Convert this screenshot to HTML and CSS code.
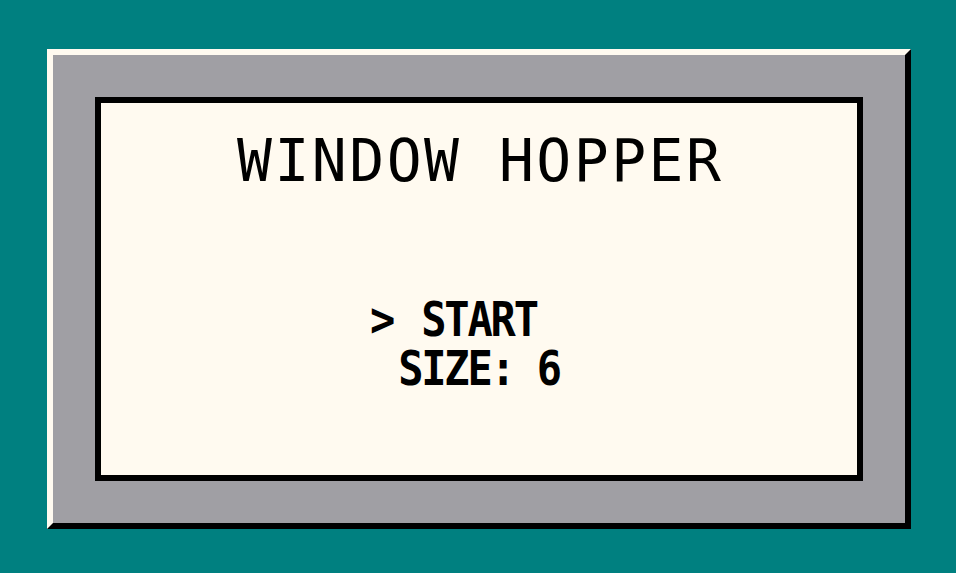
FILE: index.html
```html
<!DOCTYPE html>
<html lang="en">
<head>
    <meta charset="UTF-8">
    <meta name="viewport" content="width=device-width, initial-scale=1.0">
    <title>Window Hopper</title>
    <link rel="stylesheet" href="styles.css">
</head>
<body>
    <div class="window">
        <div class="screen">
            <h1 class="title">WINDOW HOPPER</h1>
            <ul class="menu">
                <li class="menu-item selected"><span class="label"><span class="cursor">&gt; </span>START</span></li>
                <li class="menu-item"><span class="label">SIZE: 6</span></li>
            </ul>
        </div>
    </div>
</body>
</html>
```

FILE: styles.css
```css
body {
    margin: 0;
    padding: 49px 0 0 47px;
    height: 573px;
    box-sizing: border-box;
    background-color: #008080;
    font-family: 'DejaVu Sans Mono', 'Liberation Mono', monospace;
    color: #000;
    overflow: hidden;
}

.window {
    width: 864px;
    height: 480px;
    box-sizing: border-box;
    background-color: #a09fa4;
    border: 6px solid #000;
    border-top-color: #fffaf0;
    border-left-color: #fffaf0;
    padding: 42px;
}

.screen {
    height: 100%;
    box-sizing: border-box;
    background-color: #fffaf0;
    border: 6px solid #000;
    padding-top: 29px;
    text-align: center;
}

.title {
    margin: 0;
    font-size: 58px;
    font-weight: normal;
    line-height: 58px;
    letter-spacing: 2.5px;
    padding-left: 2.5px;
}

.menu {
    list-style: none;
    margin: 105px 0 0;
    padding: 0;
    font-size: 42px;
    font-weight: bold;
    letter-spacing: -2.2px;
}

.menu-item {
    height: 49px;
    display: flex;
    justify-content: center;
    align-items: center;
}

.label {
    position: relative;
    line-height: 36px;
    transform: scaleY(1.15);
}

.cursor {
    position: absolute;
    right: 100%;
    top: 0;
    padding-right: 5px;
    white-space: pre;
}
```
